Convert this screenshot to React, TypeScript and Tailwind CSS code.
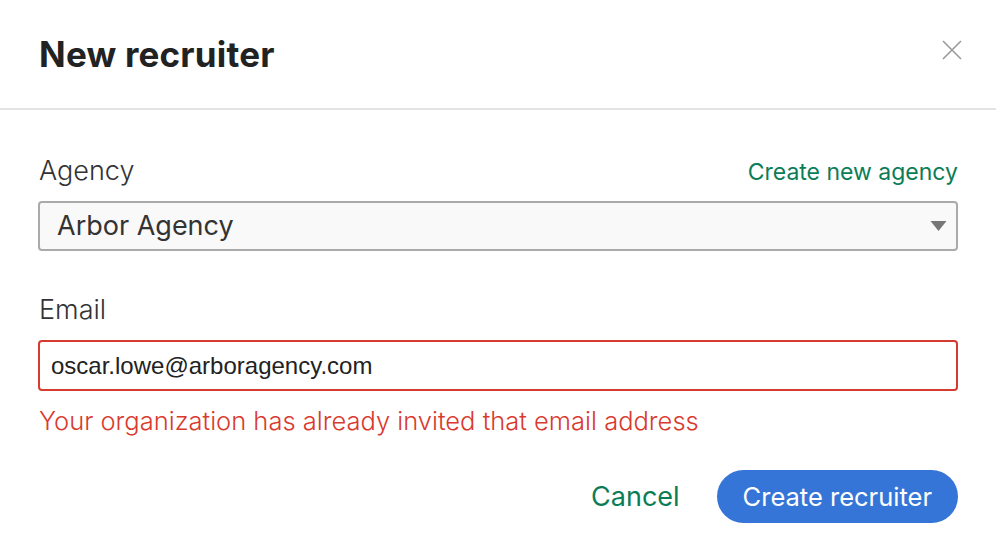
export default function App() {
  return (
    <div className="w-[996px] h-[560px] bg-white font-['Inter',sans-serif] text-[#333]">
      <div className="flex items-center justify-between h-[110px] pl-[39px] pr-[34px] border-b-2 border-[#e3e3e3]">
        <h1 className="text-[35px] leading-[40px] font-bold text-[#222] tracking-[0.2px]">New recruiter</h1>
        <button className="w-[20px] h-[20px] mb-[8px] text-[#999]">
          <svg viewBox="0 0 20 20" className="w-[20px] h-[20px]" fill="none" stroke="currentColor" strokeWidth={1.6}>
            <path d="M1 1l18 18M19 1L1 19" />
          </svg>
        </button>
      </div>

      <div className="px-[38px] pt-[45px]">
        <div className="flex items-baseline justify-between pl-[1px]">
          <label className="text-[27px] leading-[32px] font-light text-[#333]">Agency</label>
          <a className="text-[23px] leading-[32px] text-[#0b7d56]">Create new agency</a>
        </div>
        <div className="mt-[13px] h-[50px] flex items-center justify-between border-2 border-[#aaa] rounded-[4px] bg-[#f9f9f9] pl-[17px] pr-[9px]">
          <span className="text-[27px] leading-[32px] text-[#333]">Arbor Agency</span>
          <svg viewBox="0 0 16 10" className="w-[17px] h-[10px] text-[#777]" fill="currentColor">
            <path d="M0 0h16L8 10z" />
          </svg>
        </div>

        <label className="block mt-[43px] pl-[1px] text-[27px] leading-[32px] font-light text-[#333]">Email</label>
        <div className="mt-[14px] h-[51px] flex items-center border-2 border-[#d63b30] rounded-[4px] bg-white pl-[11px]">
          <span className="font-['Liberation_Sans',Arial,sans-serif] text-[24px] leading-[30px] text-[#222]">oscar.lowe@arboragency.com</span>
        </div>
        <p className="mt-[14px] pl-[1px] text-[25.5px] leading-[32px] font-light text-[#d93a2e]">
          Your organization has already invited that email address
        </p>

        <div className="mt-[33px] flex items-center justify-end gap-[37px]">
          <button className="text-[27px] leading-[32px] text-[#0b7d56]">Cancel</button>
          <button className="h-[53px] px-[26px] rounded-full bg-[#3575d7] text-white text-[25.5px] leading-[32px]">Create recruiter</button>
        </div>
      </div>
    </div>
  );
}
